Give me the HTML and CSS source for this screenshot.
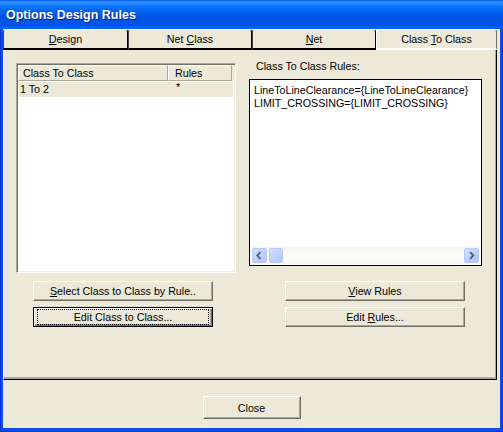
FILE: index.html
```html
<!DOCTYPE html>
<html>
<head>
<meta charset="utf-8">
<link rel="stylesheet" href="styles.css">
</head>
<body>
<div class="window">
  <div class="titlebar"><span class="title">Options Design Rules</span></div>
  <div class="client">
    <div class="tabs">
      <div class="tab t1"><span><u>D</u>esign</span></div>
      <div class="tab t2"><span>Net <u>C</u>lass</span></div>
      <div class="tab t3"><span><u>N</u>et</span></div>
      <div class="tab t4 selected"><span>Class <u>T</u>o Class</span></div>
    </div>
    <div class="panel">
      <div class="col left">
        <div class="list">
          <div class="list-head">
            <div class="hcell c1">Class To Class</div>
            <div class="hcell c2">Rules</div>
          </div>
          <div class="row">
            <span class="r1">1 To 2</span>
            <span class="r2">*</span>
          </div>
        </div>
        <div class="btns">
          <button class="btn"><span><u>S</u>elect Class to Class by Rule..</span></button>
          <button class="btn default"><span>Edit Class to Class...</span></button>
        </div>
      </div>
      <div class="col right">
        <div class="label">Class To Class Rules:</div>
        <div class="textbox">
          <div class="text">LineToLineClearance={LineToLineClearance}
LIMIT_CROSSING={LIMIT_CROSSING}</div>
          <div class="hscroll">
            <div class="sb"><div class="sb-in">
              <svg width="15" height="15" viewBox="0 0 15 15"><polyline points="8.5,3.5 5,7.5 8.5,11.5" fill="none" stroke="#4d6185" stroke-width="2.2"/></svg>
            </div></div>
            <div class="sb thumb"><div class="sb-in"></div></div>
            <div class="track"></div>
            <div class="sb"><div class="sb-in">
              <svg width="15" height="15" viewBox="0 0 15 15"><polyline points="6,3.5 9.5,7.5 6,11.5" fill="none" stroke="#4d6185" stroke-width="2.2"/></svg>
            </div></div>
          </div>
        </div>
        <div class="btns">
          <button class="btn"><span><u>V</u>iew Rules</span></button>
          <button class="btn"><span>Edit <u>R</u>ules...</span></button>
        </div>
      </div>
    </div>
    <div class="footer">
      <button class="btn close"><span>Close</span></button>
    </div>
  </div>
</div>
</body>
</html>
```

FILE: styles.css
```css
body {
  margin: 0;
  background: #ffffff;
}

.window {
  width: 503px;
  height: 432px;
  box-sizing: border-box;
  display: flex;
  flex-direction: column;
  background: #0c50e6;
  box-shadow: inset 1px 0 0 #0831d9, inset -1px 0 0 #0831d9, inset 0 -1px 0 #0831d9;
  font-family: "Liberation Sans", Arial, sans-serif;
  font-size: 10.7px;
  color: #000;
}

.titlebar {
  height: 29px;
  flex: none;
  display: flex;
  align-items: center;
  padding-left: 6px;
  background: linear-gradient(to bottom,
    #0058ee 0%, #3a93ff 7%, #288eff 11%, #127dff 18%,
    #036ffc 28%, #0262ee 40%, #0057e5 55%, #0054e3 72%,
    #0055eb 86%, #005bf5 93%, #026afe 100%);
}

.title {
  color: #fff;
  font-weight: bold;
  font-size: 12.5px;
  text-shadow: 1px 1px 0 #0f1e8a;
}

.client {
  flex: 1;
  margin: 0 3px 4px 3px;
  background: #ece9d8;
  display: flex;
  flex-direction: column;
}

.tabs {
  display: flex;
  height: 21px;
  flex: none;
  margin-right: 3px;
}

.tab {
  box-sizing: border-box;
  height: 21px;
  display: flex;
  align-items: center;
  justify-content: center;
  border-top: 1px solid #fff;
  border-left: 1px solid #404040;
  border-right: 1px solid #000;
  border-bottom: 2px solid #000;
  border-radius: 3px 3px 0 0;
}

.t1 { width: 125px; }
.t2 { width: 124px; }
.t3 { width: 124px; }
.t4 { width: 121px; }

.tab.selected {
  border-left: 1px solid #fff;
  border-right: 1px solid #716f64;
  border-bottom: 2px solid #fff;
}

.panel {
  height: 330px;
  flex: none;
  box-sizing: border-box;
  margin-right: 3px;
  border-left: 1px solid #fff;
  border-right: 1px solid #000;
  border-bottom: 1px solid #000;
  box-shadow: inset -1px -2px 0 #aca899;
  display: flex;
  padding: 13px 0 0 12px;
  gap: 13px;
}

.col {
  display: flex;
  flex-direction: column;
}

.left { width: 220px; }
.right { width: 233px; }

.list {
  height: 210px;
  box-sizing: border-box;
  background: #fff;
  border-style: solid;
  border-width: 1px;
  border-color: #aca899 #fff #fff #aca899;
  box-shadow: inset 1px 1px 0 #716f64, inset -1px -1px 0 #f1efe2;
  padding: 1px;
}

.list-head {
  display: flex;
  height: 16px;
  background: #ece9d8;
}

.hcell {
  box-sizing: border-box;
  height: 16px;
  border-top: 1px solid #fff;
  border-left: 1px solid #fff;
  border-right: 1px solid #aca899;
  border-bottom: 1px solid #aca899;
  line-height: 14px;
}

.c1 { width: 150px; padding-left: 4px; }
.c2 { width: 64px; padding-left: 6px; }

.row {
  display: flex;
  height: 15px;
  margin: 1px 1px 0 1px;
  background: #ece9d8;
  line-height: 15px;
}

.r1 { width: 149px; padding-left: 1px; box-sizing: border-box; }
.r2 { padding-left: 8px; line-height: 11px; }

.btns {
  display: flex;
  flex-direction: column;
  gap: 6px;
}

.left .btns { margin: 8px 0 0 17px; }
.right .btns { margin: 15px 0 0 36px; }

.btn {
  width: 180px;
  height: 20px;
  box-sizing: border-box;
  padding: 0;
  font: inherit;
  color: #000;
  background: #ece9d8;
  border-style: solid;
  border-width: 1px;
  border-color: #fff #716f64 #716f64 #fff;
  box-shadow: inset -1px -1px 0 #aca899;
  display: flex;
  align-items: center;
  justify-content: center;
}

.btn.default {
  position: relative;
  border: 1px solid #000;
  box-shadow: inset 1px 1px 0 #fff, inset -1px -1px 0 #716f64, inset -2px -2px 0 #aca899;
}

.btn.default::after {
  content: "";
  position: absolute;
  left: 3px;
  right: 3px;
  top: 1px;
  bottom: 1px;
  border: 1px dotted #000;
}

.label {
  margin-top: -3px;
  height: 19px;
  line-height: 13px;
  padding-left: 7px;
}

.textbox {
  height: 187px;
  box-sizing: border-box;
  border: 1px solid #000;
  padding: 1px;
  background: #fff;
  display: flex;
  flex-direction: column;
}

.text {
  flex: 1;
  padding: 3px 3px 0 3px;
  line-height: 13px;
  white-space: pre;
  overflow: hidden;
}

.hscroll {
  height: 17px;
  display: flex;
  background: linear-gradient(to bottom, #f3f2ec, #fefefb 60%, #f7f6f1);
}

.sb {
  width: 17px;
  height: 17px;
  box-sizing: border-box;
  padding: 1px;
  flex: none;
}

.sb.thumb { width: 16px; }

.sb-in {
  width: 100%;
  height: 100%;
  box-sizing: border-box;
  border: 1px solid #b7c9f5;
  border-radius: 2px;
  background: linear-gradient(135deg, #d5e1fd, #bccffb 60%, #b2c7fa);
  display: flex;
  align-items: center;
  justify-content: center;
}

.track { flex: 1; }

.footer {
  flex: 1;
  display: flex;
  justify-content: center;
  padding-top: 16px;
}

.btn.close {
  width: 98px;
  height: 23px;
}
```
